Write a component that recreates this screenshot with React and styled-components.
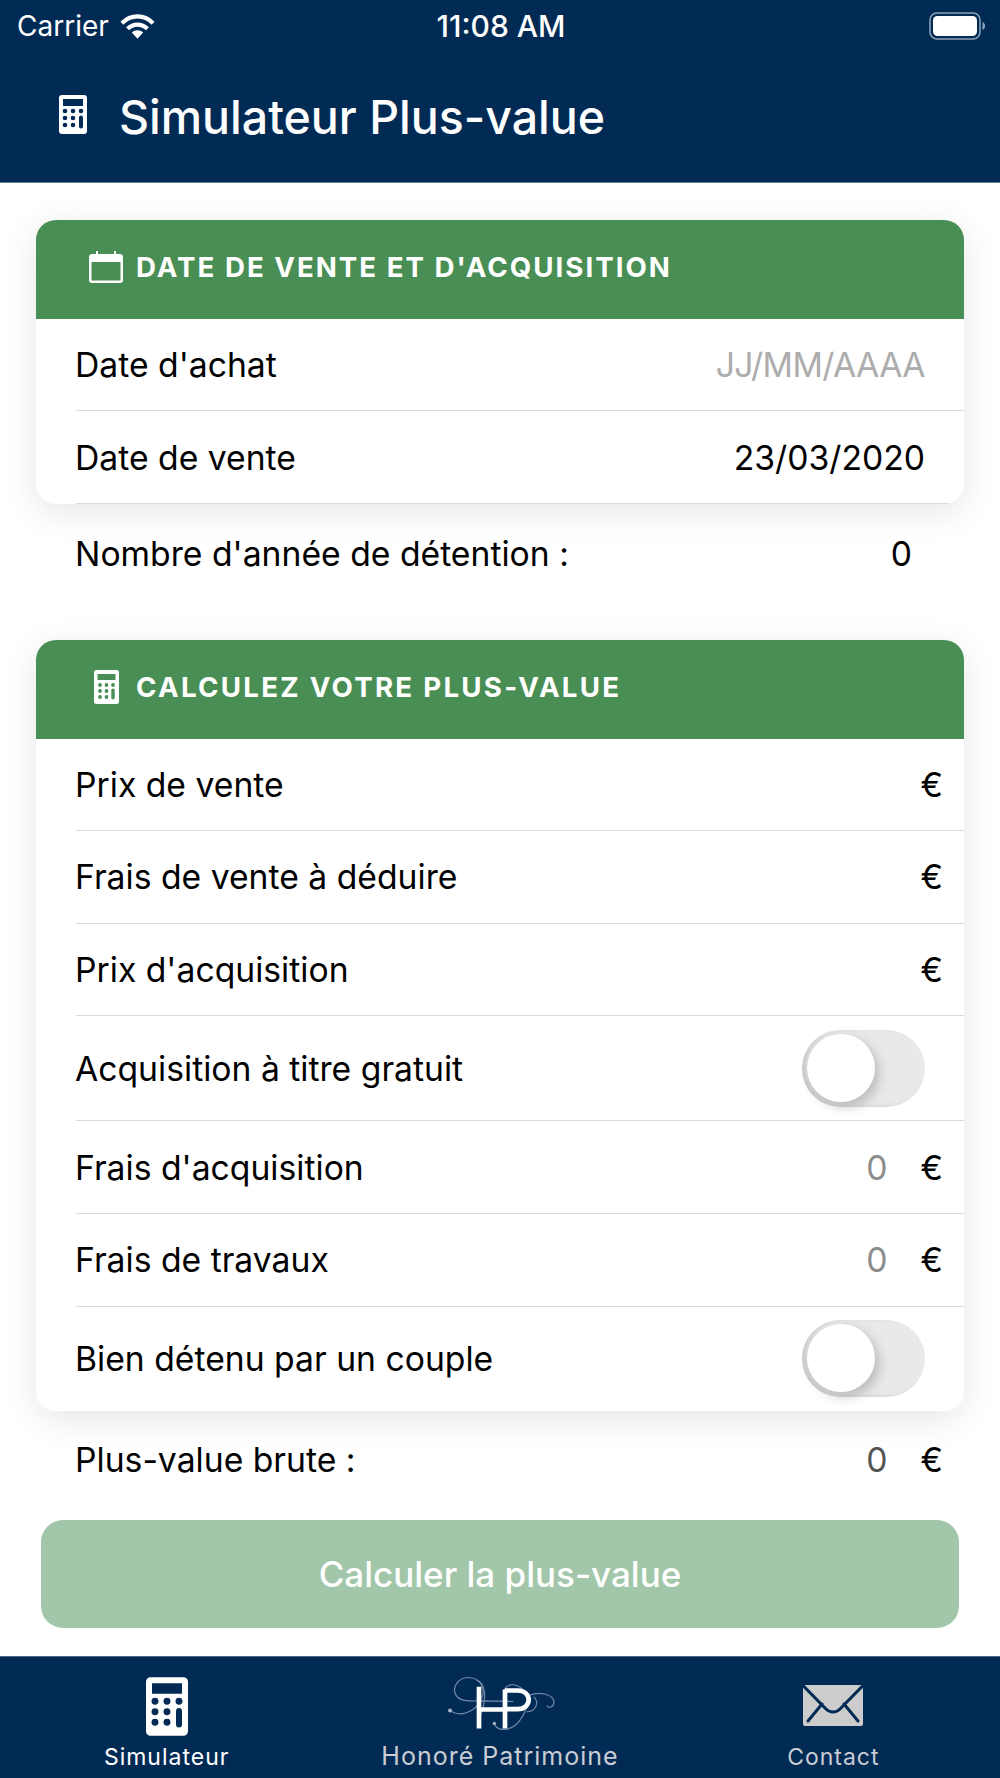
import styled, { createGlobalStyle } from "styled-components";

const GlobalStyle = createGlobalStyle`
  html, body {
    margin: 0;
    padding: 0;
    background: #fff;
  }
  body {
    font-family: Inter, "Liberation Sans", sans-serif;
    color: #000;
  }
`;

const Page = styled.div`
  width: 1000px;
  height: 1778px;
  display: flex;
  flex-direction: column;
  overflow: hidden;
`;

const TopBar = styled.header`
  height: 183px;
  box-sizing: border-box;
  background: #012b55;
  border-bottom: 1px solid #5d7793;
  color: #fff;
`;

const StatusBar = styled.div`
  height: 51px;
  display: grid;
  grid-template-columns: 1fr auto 1fr;
  align-items: center;
  padding: 0 15px 0 17px;
  font-size: 28px;
`;

const Carrier = styled.div`
  display: flex;
  align-items: center;
  gap: 11px;
`;

const Clock = styled.div`
  font-size: 30px;
  font-weight: 500;
`;

const Battery = styled.div`
  justify-self: end;
  display: flex;
  align-items: center;
`;

const TitleRow = styled.div`
  display: flex;
  align-items: flex-start;
  gap: 32px;
  padding: 41px 0 0 59px;
`;

const TitleIcon = styled.div`
  padding-top: 3px;
`;

const Title = styled.h1`
  margin: 0;
  font-size: 46.5px;
  font-weight: 500;
  line-height: 50px;
`;

const Content = styled.main`
  flex: 1;
  padding: 37px 36px 0;
`;

const Card = styled.section`
  background: #fff;
  border-radius: 20px;
  overflow: hidden;
  box-shadow: 0 8px 34px rgba(0, 0, 0, 0.1);
`;

const CardHead = styled.div`
  height: 98.5px;
  box-sizing: border-box;
  display: flex;
  align-items: center;
  padding: 0 0 4px 40px;
  background: #498e54;
  color: #fff;
`;

const HeadIcon = styled.div`
  width: 60px;
  display: flex;
  justify-content: center;
`;

const HeadTitle = styled.h2`
  margin: 0;
  font-size: 27.7px;
  font-weight: 700;
  letter-spacing: ${(p) => p.$spacing || 2}px;
`;

const Row = styled.div`
  height: ${(p) => p.$height || 92.6}px;
  box-sizing: border-box;
  margin-left: 40px;
  padding-right: ${(p) => p.$pad ?? 21}px;
  display: flex;
  align-items: center;
  justify-content: space-between;
  font-size: 33.7px;
  text-indent: -1px;
  border-bottom: ${(p) => (p.$last ? "none" : "1.5px solid #d9d9d9")};
`;

const Value = styled.div`
  display: flex;
  align-items: center;
  gap: 34px;
  color: ${(p) => p.$color || "#000"};
`;

const DateHint = styled.span`
  color: #adadad;
  letter-spacing: -0.6px;
`;

const Amount = styled.span`
  color: ${(p) => p.$color || "#8c8c8c"};
`;

const Summary = styled.div`
  height: ${(p) => p.$height}px;
  box-sizing: border-box;
  margin-bottom: ${(p) => p.$after}px;
  padding: 0 ${(p) => p.$right}px 0 40px;
  display: flex;
  align-items: center;
  justify-content: space-between;
  font-size: 33.7px;
  text-indent: -1px;
`;

const Switch = styled.div`
  position: relative;
  width: 123px;
  height: 77px;
  border-radius: 39px;
  background: #e9e9e9;
  box-shadow: inset 5px -1px 6px -2px rgba(0, 0, 0, 0.16);
`;

const Knob = styled.div`
  position: absolute;
  left: 5px;
  top: 4px;
  width: 68px;
  height: 68px;
  border-radius: 50%;
  background: #fff;
  box-shadow: 4px 5px 12px rgba(0, 0, 0, 0.2);
`;

const SubmitButton = styled.button`
  display: block;
  width: 918px;
  height: 108px;
  margin: 0 5px;
  border: 0;
  border-radius: 22px;
  background: #a2c6a9;
  color: #fff;
  font-family: inherit;
  font-size: 35px;
  font-weight: 500;
`;

const TabBar = styled.nav`
  height: 122px;
  box-sizing: border-box;
  display: grid;
  grid-template-columns: repeat(3, 1fr);
  background: #012b55;
  border-top: 1px solid #4d6a88;
`;

const Tab = styled.div`
  display: flex;
  flex-direction: column;
  align-items: center;
  justify-content: flex-end;
  padding-bottom: 7px;
  font-size: ${(p) => p.$size || 23}px;
  letter-spacing: 1px;
  color: ${(p) => (p.$active ? "#fff" : "#c9cdd3")};
`;

const TabIcon = styled.div`
  height: ${(p) => p.$box}px;
  display: flex;
  align-items: flex-start;
  justify-content: center;
`;

const CalculatorIcon = ({ width, height }) => (
  <svg width={width} height={height} viewBox="0 0 28 39">
    <path
      fill="#fff"
      fillRule="evenodd"
      d="M3 0h22a3 3 0 0 1 3 3v33a3 3 0 0 1-3 3H3a3 3 0 0 1-3-3V3a3 3 0 0 1 3-3Zm1 4v7h20V4H4Z"
    />
    {[16, 23, 30].flatMap((y) =>
      [6, 14, 22].map((x) =>
        x === 22 && y > 16 ? null : <circle key={`${x}-${y}`} cx={x} cy={y} r="2.3" fill="#012b55" />
      )
    )}
    <rect x="20" y="20.5" width="4" height="13" rx="2" fill="#012b55" />
  </svg>
);

const GreenCalculatorIcon = () => (
  <svg width="25" height="34" viewBox="0 0 25 34">
    <path
      fill="#fff"
      fillRule="evenodd"
      d="M2.5 0h20A2.5 2.5 0 0 1 25 2.5v29a2.5 2.5 0 0 1-2.5 2.5h-20A2.5 2.5 0 0 1 0 31.5v-29A2.5 2.5 0 0 1 2.5 0Zm1 4v6h18V4h-18Z"
    />
    {[15, 21, 27].flatMap((y) =>
      [6, 12.5, 19].map((x) =>
        x === 19 && y > 15 ? null : <circle key={`${x}-${y}`} cx={x} cy={y} r="1.9" fill="#498e54" />
      )
    )}
    <rect x="17.3" y="18.5" width="3.4" height="11" rx="1.7" fill="#498e54" />
  </svg>
);

const CalendarIcon = () => (
  <svg width="34" height="32" viewBox="0 0 34 32">
    <path
      fill="#fff"
      fillRule="evenodd"
      d="M7 0h2v3h16V0h2v3h4a3 3 0 0 1 3 3v23a3 3 0 0 1-3 3H3a3 3 0 0 1-3-3V6a3 3 0 0 1 3-3h4V0ZM2.5 11v18c0 .4.2.6.6.6h27.8c.4 0 .6-.2.6-.6V11h-29Z"
    />
  </svg>
);

const WifiIcon = () => (
  <svg width="35" height="26" viewBox="0 0 37 27">
    <g fill="none" stroke="#fff" strokeWidth="4.4">
      <path d="M2 10.5C11.5 1 25.5 1 35 10.5" />
      <path d="M8 16.5C14 10.5 23 10.5 29 16.5" />
    </g>
    <path fill="#fff" d="M12.5 20.5c3.5-3.3 8.5-3.3 12 0L18.5 27l-6-6.5Z" />
  </svg>
);

const BatteryIcon = () => (
  <svg width="56" height="28" viewBox="0 0 56 28">
    <rect x="1" y="1" width="50" height="26" rx="7" fill="none" stroke="#8fa3b8" strokeWidth="1.5" />
    <rect x="4" y="4" width="44" height="20" rx="4.5" fill="#fff" />
    <path d="M53.5 10c1.5.5 2.5 2 2.5 4s-1 3.5-2.500 4Z" fill="#8fa3b8" />
  </svg>
);

const EnvelopeIcon = () => (
  <svg width="60" height="41" viewBox="0 0 60 41">
    <path fill="#cccccc" d="M2 0h56a2 2 0 0 1 2 2v37a2 2 0 0 1-2 2H2a2 2 0 0 1-2-2V2a2 2 0 0 1 2-2Z" />
    <path
      fill="none"
      stroke="#012b55"
      strokeWidth="3"
      strokeLinecap="round"
      d="M0.5 1 23 24c4 4 10 4 14 0L59.5 1M5 36l14-17M55 36 41 19"
    />
  </svg>
);

const LogoMark = () => (
  <svg width="110" height="57" viewBox="195 45 330 170">
    <g fill="none" stroke="#7489a9" strokeWidth="3.5">
      <path d="M210 150C235 172 285 160 305 115 318 85 300 52 265 52 232 52 215 85 228 105 238 122 262 124 300 122L400 124" />
      <path d="M343 190C352 215 395 215 420 180 445 145 450 110 425 85 405 68 375 70 372 95" />
      <path d="M440 108C475 92 522 100 522 128 520 142 505 145 500 136" />
      <path d="M440 155C465 155 480 130 462 110" />
      <path d="M290 60c30 10 30 60 10 110" />
    </g>
    <circle cx="210" cy="151" r="6" fill="#a5b3c9" />
    <circle cx="343" cy="190" r="5" fill="#a5b3c9" />
    <path
      fill="none"
      stroke="#fff"
      strokeWidth="14"
      d="M297 80v125M375 88v117M297 148h78M375 91h38c44 0 44 56 0 56h-38"
    />
  </svg>
);

const App = () => {
  return (
    <Page>
      <GlobalStyle />
      <TopBar>
        <StatusBar>
          <Carrier>
            Carrier
            <WifiIcon />
          </Carrier>
          <Clock>11:08 AM</Clock>
          <Battery>
            <BatteryIcon />
          </Battery>
        </StatusBar>
        <TitleRow>
          <TitleIcon>
            <CalculatorIcon width={28} height={39} />
          </TitleIcon>
          <Title>Simulateur Plus-value</Title>
        </TitleRow>
      </TopBar>

      <Content>
        <Card>
          <CardHead>
            <HeadIcon>
              <CalendarIcon />
            </HeadIcon>
            <HeadTitle>DATE DE VENTE ET D'ACQUISITION</HeadTitle>
          </CardHead>
          <Row $pad={39}>
            Date d'achat
            <DateHint>JJ/MM/AAAA</DateHint>
          </Row>
          <Row $height={93} $pad={39}>
            Date de vente
            <span>23/03/2020</span>
          </Row>
        </Card>
        <Summary $height={98} $after={38} $right={52}>
          Nombre d'année de détention :<span>0</span>
        </Summary>

        <Card>
          <CardHead>
            <HeadIcon>
              <GreenCalculatorIcon />
            </HeadIcon>
            <HeadTitle $spacing={2.25}>CALCULEZ VOTRE PLUS-VALUE</HeadTitle>
          </CardHead>
          <Row>
            Prix de vente
            <Value>€</Value>
          </Row>
          <Row>
            Frais de vente à déduire
            <Value>€</Value>
          </Row>
          <Row>
            Prix d'acquisition
            <Value>€</Value>
          </Row>
          <Row $height={105} $pad={39}>
            Acquisition à titre gratuit
            <Switch>
              <Knob />
            </Switch>
          </Row>
          <Row>
            Frais d'acquisition
            <Value>
              <Amount>0</Amount>€
            </Value>
          </Row>
          <Row>
            Frais de travaux
            <Value>
              <Amount>0</Amount>€
            </Value>
          </Row>
          <Row $height={104} $pad={39} $last>
            Bien détenu par un couple
            <Switch>
              <Knob />
            </Switch>
          </Row>
        </Card>
        <Summary $height={97} $after={12} $right={21}>
          Plus-value brute :
          <Value>
            <Amount $color="#555">0</Amount>€
          </Value>
        </Summary>
        <SubmitButton>Calculer la plus-value</SubmitButton>
      </Content>

      <TabBar>
        <Tab $active>
          <TabIcon $box={66}>
            <CalculatorIcon width={42} height={59} />
          </TabIcon>
          Simulateur
        </Tab>
        <Tab $size={25}>
          <TabIcon $box={66}>
            <LogoMark />
          </TabIcon>
          Honoré Patrimoine
        </Tab>
        <Tab>
          <TabIcon $box={58}>
            <EnvelopeIcon />
          </TabIcon>
          Contact
        </Tab>
      </TabBar>
    </Page>
  );
};

export default App;
